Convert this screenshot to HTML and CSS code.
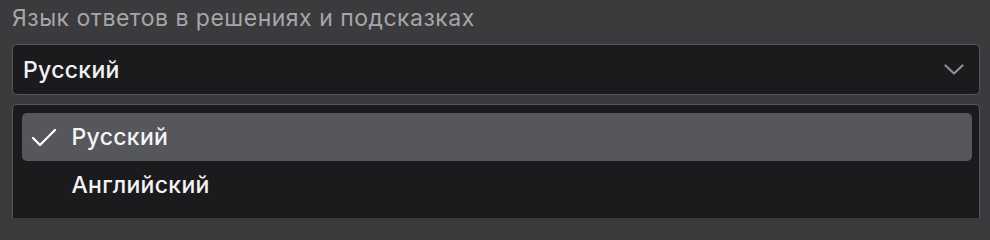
FILE: index.html
```html
<!DOCTYPE html>
<html lang="ru">
<head>
<meta charset="utf-8">
<link rel="stylesheet" href="styles.css">
</head>
<body>
<div class="field">
  <div class="label">Язык ответов в решениях и подсказках</div>
  <div class="select">
    <span class="select-value">Русский</span>
    <svg class="chevron" width="20" height="11" viewBox="0 0 20 11"><path d="M1.5 1.5 L10 9.5 L18.5 1.5" fill="none" stroke="#8e8e93" stroke-width="2.2" stroke-linecap="round" stroke-linejoin="round"/></svg>
  </div>
  <div class="menu">
    <div class="option selected">
      <svg class="check" width="26" height="19" viewBox="0 0 26 19"><path d="M2 10 L9 17 L24 2" fill="none" stroke="#ffffff" stroke-width="2.2" stroke-linecap="round" stroke-linejoin="round"/></svg>
      <span>Русский</span>
    </div>
    <div class="option">
      <span class="check-space"></span>
      <span>Английский</span>
    </div>
  </div>
</div>
</body>
</html>
```
FILE: styles.css
```css
html, body {
  margin: 0;
  padding: 0;
  background: #3b3b3e;
  height: 218px;
  overflow: hidden;
}
body {
  font-family: Inter, "Noto Sans", sans-serif;
}
.field {
  padding: 5px 10px 0 12px;
}
.label {
  font-size: 23px;
  line-height: 27px;
  letter-spacing: 0.5px;
  color: #a6a6aa;
  margin-bottom: 12px;
}
.select {
  box-sizing: border-box;
  height: 51px;
  display: flex;
  align-items: center;
  justify-content: space-between;
  background: #1b1b1d;
  border: 1.5px solid #56565b;
  border-radius: 5px;
  padding: 0 15px 0 10px;
  color: #f2f2f4;
  font-size: 23px;
  font-weight: 500;
  letter-spacing: 0.3px;
}
.chevron {
  display: block;
}
.menu {
  margin-top: 9px;
  box-sizing: border-box;
  background: #1b1b1d;
  border: 1.5px solid #56565b;
  border-bottom: none;
  border-radius: 5px 5px 0 0;
  padding: 8px 7.5px 0 8.5px;
  height: 120px;
}
.option {
  height: 48px;
  display: flex;
  align-items: center;
  padding-left: 9px;
  gap: 15px;
  color: #f4f4f6;
  font-size: 23px;
  font-weight: 500;
  letter-spacing: 0.3px;
  border-radius: 5px;
}
.option.selected {
  background: #56565d;
}
.check {
  display: block;
  flex: none;
}
.check-space {
  width: 26px;
  flex: none;
}
```
